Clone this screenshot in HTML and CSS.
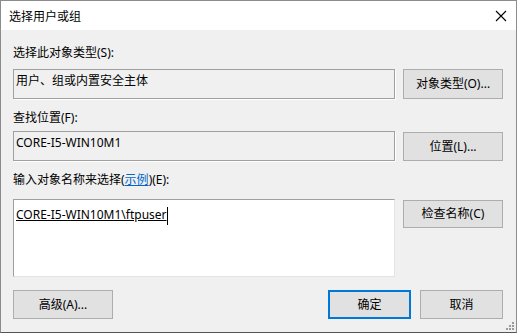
FILE: index.html
```html
<!DOCTYPE html>
<html lang="zh-CN">
<head>
<meta charset="utf-8">
<title>选择用户或组</title>
<link rel="stylesheet" href="styles.css">
</head>
<body>
<div class="window">
  <div class="titlebar">
    <span class="title">选择用户或组</span>
    <svg class="close" width="12" height="12" viewBox="0 0 12 12"><path d="M1 1 L11 11 M11 1 L1 11" stroke="#000" stroke-width="1.1" fill="none"/></svg>
  </div>
  <div class="content">
    <div class="label l1">选择此对象类型(S):</div>
    <div class="row r1">
      <div class="field">用户、组或内置安全主体</div>
      <div class="btn">对象类型(O)...</div>
    </div>
    <div class="label l2">查找位置(F):</div>
    <div class="row r2">
      <div class="field">CORE-I5-WIN10M1</div>
      <div class="btn">位置(L)...</div>
    </div>
    <div class="label l3">输入对象名称来选择(<span class="link">示例</span>)(E):</div>
    <div class="row r3">
      <div class="edit"><span class="resolved">CORE-I5-WIN10M1\ftpuser</span><span class="caret"></span></div>
      <div class="btn check">检查名称(C)</div>
    </div>
    <div class="bottom">
      <div class="btn">高级(A)...</div>
      <div class="spacer"></div>
      <div class="btn ok">确定</div>
      <div class="btn cancel">取消</div>
    </div>
    <svg class="grip" width="9" height="9" viewBox="0 0 9 9" fill="#9a9a9a">
      <rect x="7" y="1" width="2" height="2"/>
      <rect x="4" y="4" width="2" height="2"/><rect x="7" y="4" width="2" height="2"/>
      <rect x="1" y="7" width="2" height="2"/><rect x="4" y="7" width="2" height="2"/><rect x="7" y="7" width="2" height="2"/>
    </svg>
  </div>
</div>
</body>
</html>
```
FILE: styles.css
```css
html, body {
  margin: 0;
  padding: 0;
  background: #f0f0f0;
}
body {
  font-family: "Noto Sans", "Noto Sans CJK SC", sans-serif;
  font-size: 12px;
  color: #000;
}
.window {
  width: 517px;
  height: 333px;
  box-sizing: border-box;
  border: 1px solid #8c8c8c;
  border-bottom-color: #555;
  display: flex;
  flex-direction: column;
  background: #f0f0f0;
}
.titlebar {
  height: 29px;
  background: #fff;
  display: flex;
  align-items: center;
  padding-left: 8px;
  padding-right: 9px;
  flex-shrink: 0;
}
.title {
  flex: 1;
  line-height: 16px;
  padding-top: 2px;
}
.close {
  display: block;
}
.content {
  position: relative;
  flex: 1;
  padding: 15px 13px 0 12px;
  display: flex;
  flex-direction: column;
}
.label {
  line-height: 16px;
  height: 16px;
}
.l2, .l3 { margin-top: 11px; }
.link {
  color: #0066cc;
  text-decoration: underline;
}
.row {
  display: flex;
  gap: 8px;
  align-items: flex-start;
}
.r1 { margin-top: 8px; }
.r2 { margin-top: 5px; }
.r3 { margin-top: 11px; }
.field {
  flex: 1;
  height: 30px;
  box-sizing: border-box;
  border: 1px solid #a0a0a0;
  box-shadow: 1px 1px 0 #fff;
  padding: 3px 2px;
  line-height: 16px;
}
.edit {
  flex: 1;
  height: 78px;
  box-sizing: border-box;
  background: #fff;
  border: 1px solid #a0a0a0;
  border-right-color: #e3e3e3;
  border-bottom-color: #e3e3e3;
  padding: 7px 2px;
  line-height: 16px;
  display: flex;
  align-items: flex-start;
}
.resolved {
  text-decoration: underline;
}
.caret {
  display: inline-block;
  width: 1px;
  height: 18px;
  background: #000;
}
.btn {
  width: 100px;
  height: 30px;
  box-sizing: border-box;
  background: #e1e1e1;
  border: 1px solid #adadad;
  display: flex;
  align-items: center;
  justify-content: center;
  line-height: 16px;
  flex-shrink: 0;
}
.r2 .btn { margin-top: 1px; height: 29px; }
.check { margin-top: 1px; height: 28px; }
.bottom {
  display: flex;
  margin-top: 13px;
  align-items: flex-start;
}
.bottom .btn { height: 29px; }
.spacer { flex: 1; }
.ok {
  width: 83px;
  border: 2px solid #0078d7;
}
.cancel {
  width: 83px;
  margin-left: 9px;
}
.grip {
  position: absolute;
  right: 2px;
  bottom: 2px;
}
```
